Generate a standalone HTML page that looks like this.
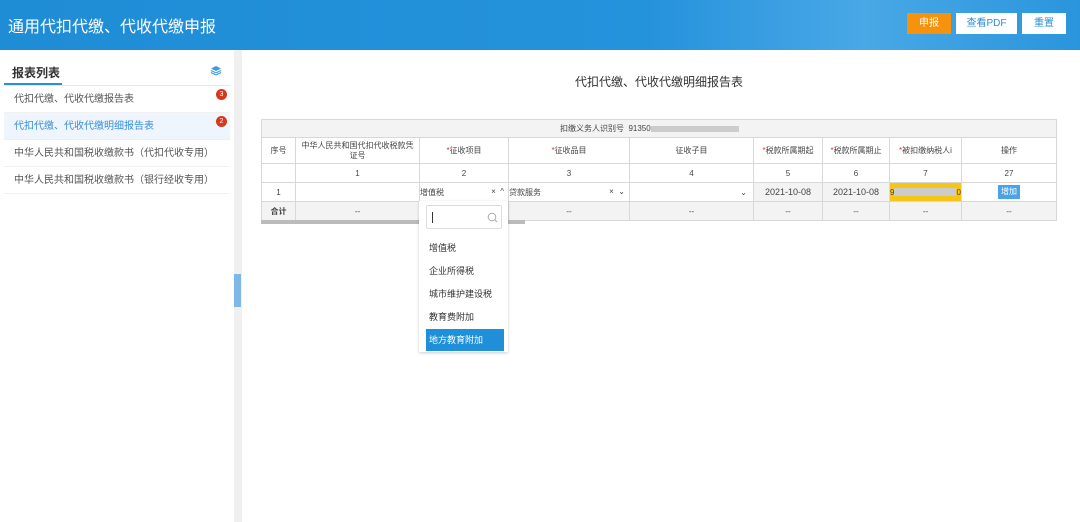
<!DOCTYPE html><html><head><meta charset="utf-8"><style>
*{margin:0;padding:0;box-sizing:border-box}
body{width:1080px;height:522px;overflow:hidden;background:#fff;font-family:"Liberation Sans","Noto Sans CJK SC",sans-serif;position:relative;color:#333}
.hd{position:absolute;left:0;top:0;width:1080px;height:50px;background:linear-gradient(90deg,#1f8cd6 0%,#2592dc 60%,#49a8e6 80%,#2a95dc 100%)}
.hd h1{position:absolute;left:8px;top:13px;font-size:16px;font-weight:normal;color:#fff}
.btn{position:absolute;top:13px;height:21px;font-size:10px;text-align:center;line-height:21px;background:#fff;color:#2a8fd8}
.side{position:absolute;left:0;top:50px;width:234px;height:472px;background:#fff}
.gap{position:absolute;left:234px;top:50px;width:8px;height:472px;background:#f0f0f0}
.item{position:absolute;left:4px;width:226px;height:27px;font-size:10px;line-height:27px;padding-left:10px;color:#555;border-bottom:1px solid #f0f0f0}
.badge{position:absolute;left:216px;width:11px;height:11px;border-radius:50%;background:#d9361c;color:#fff;font-size:7px;line-height:11px;text-align:center}
table{position:absolute;left:261px;top:119px;border-collapse:collapse;font-size:8px;color:#444;table-layout:fixed}
td{border:1px solid #d8d8d8;text-align:center;padding:0;overflow:hidden;white-space:nowrap}
.g td{background:#f3f3f3}
.r{color:#e03030}
.dd{position:absolute;left:419px;top:201px;width:89px;height:151px;background:#fff;box-shadow:0 1px 3px rgba(0,0,0,.2)}
.dd div.o{position:absolute;left:10px;font-size:9px;color:#333}
</style></head><body>
<div class="hd"><h1>通用代扣代缴、代收代缴申报</h1>
<div class="btn" style="left:907px;width:44px;background:#f7920e;color:#fff">申报</div>
<div class="btn" style="left:956px;width:61px">查看PDF</div>
<div class="btn" style="left:1022px;width:44px">重置</div></div>
<div class="side">
<div style="position:absolute;left:12px;top:14px;font-size:12px;color:#333;font-weight:bold">报表列表</div>
<div style="position:absolute;left:4px;top:33px;width:58px;height:2px;background:#2a8fd8"></div>
<div style="position:absolute;left:4px;top:35px;width:226px;height:1px;background:#e8e8e8"></div>
<svg style="position:absolute;left:210px;top:15px" width="12" height="11"><path d="M6 1L11 3.5L6 6L1 3.5Z" fill="#3a9be0"/><path d="M1 5.5L6 8L11 5.5" stroke="#3a9be0" fill="none"/><path d="M1 7.5L6 10L11 7.5" stroke="#3a9be0" fill="none"/></svg>
<div class="item" style="top:36px">代扣代缴、代收代缴报告表</div>
<div class="item" style="top:63px;background:#eef5fc;color:#3a8fd8">代扣代缴、代收代缴明细报告表</div>
<div class="item" style="top:90px">中华人民共和国税收缴款书（代扣代收专用）</div>
<div class="item" style="top:117px">中华人民共和国税收缴款书（银行经收专用）</div>
<div class="badge" style="top:39px">3</div><div class="badge" style="top:66px">2</div>
</div>
<div class="gap"></div>
<div style="position:absolute;left:234px;top:274px;width:7px;height:33px;background:#7fb8e6"></div>
<div style="position:absolute;left:575px;top:73px;font-size:12px;color:#333">代扣代缴、代收代缴明细报告表</div>
<table>
<colgroup><col width="34"><col width="124"><col width="89"><col width="121"><col width="124"><col width="69"><col width="67"><col width="72"><col width="95"></colgroup>
<tr style="height:18px" class="g"><td colspan="9" style="text-align:left;padding-left:298px">扣缴义务人识别号 &nbsp;91350<span style="display:inline-block;width:88px;height:6px;background:#ccc;vertical-align:middle"></span></td></tr>
<tr style="height:26px"><td>序号</td><td style="white-space:normal;line-height:10px;padding:0 4px">中华人民共和国代扣代收税款凭证号</td><td><span class="r">*</span>征收项目</td><td><span class="r">*</span>征收品目</td><td>征收子目</td><td><span class="r">*</span>税款所属期起</td><td><span class="r">*</span>税款所属期止</td><td><span class="r">*</span>被扣缴纳税人i</td><td>操作</td></tr>
<tr style="height:19px"><td></td><td>1</td><td>2</td><td>3</td><td>4</td><td>5</td><td>6</td><td>7</td><td>27</td></tr>
<tr style="height:19px"><td>1</td><td></td><td style="text-align:left">增值税<span style="float:right;padding-right:4px">×&nbsp; ^</span></td><td style="text-align:left">贷款服务<span style="float:right;padding-right:4px">× &nbsp;⌄</span></td><td style="text-align:right;padding-right:6px">⌄</td><td style="background:#f3f3f3;font-size:9px">2021-10-08</td><td style="background:#f3f3f3;font-size:9px">2021-10-08</td><td style="background:#f5c518;text-align:left">9<span style="display:inline-block;width:62px;height:8px;background:#ccc;vertical-align:middle"></span>0</td><td><span style="display:inline-block;width:22px;height:14px;background:#4aa3e8;color:#fff;line-height:14px">增加</span></td></tr>
<tr style="height:19px" class="g"><td style="font-weight:bold">合计</td><td>--</td><td></td><td>--</td><td>--</td><td>--</td><td>--</td><td>--</td><td>--</td></tr>
</table>
<div style="position:absolute;left:261px;top:220px;width:264px;height:4px;background:#bbb"></div>
<div class="dd">
<div style="position:absolute;left:7px;top:4px;width:76px;height:24px;border:1px solid #ddd;border-radius:2px"><div style="position:absolute;left:5px;top:6px;width:1px;height:11px;background:#333"></div><svg style="position:absolute;left:60px;top:6px" width="11" height="11"><circle cx="5" cy="5" r="3.8" stroke="#aaa" fill="none"/><path d="M8 8L10 10" stroke="#aaa"/></svg></div>
<div class="o" style="top:40px">增值税</div>
<div class="o" style="top:63px">企业所得税</div>
<div class="o" style="top:86px">城市维护建设税</div>
<div class="o" style="top:109px">教育费附加</div>
<div style="position:absolute;left:7px;top:128px;width:78px;height:22px;background:#1e8fd8;color:#fff;font-size:9px;line-height:22px;padding-left:3px">地方教育附加</div>
</div>
</body></html>
